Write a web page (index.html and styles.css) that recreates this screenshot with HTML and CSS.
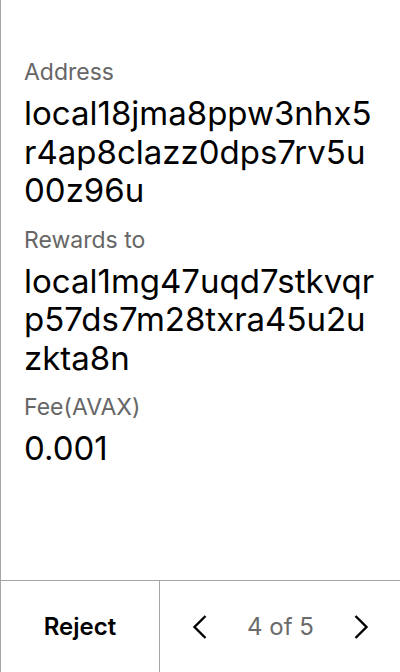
FILE: index.html
```html
<!DOCTYPE html>
<html lang="en">
<head>
<meta charset="utf-8">
<title>Review</title>
<link rel="stylesheet" href="styles.css">
</head>
<body>
<div class="screen">
  <main class="content">
    <section class="field">
      <div class="label">Address</div>
      <div class="value">local18jma8ppw3nhx5r4ap8clazz0dps7rv5u00z96u</div>
    </section>
    <section class="field">
      <div class="label">Rewards to</div>
      <div class="value">local1mg47uqd7stkvqrp57ds7m28txra45u2uzkta8n</div>
    </section>
    <section class="field">
      <div class="label">Fee(AVAX)</div>
      <div class="value">0.001</div>
    </section>
  </main>
  <footer class="actions">
    <button class="reject">Reject</button>
    <div class="pager">
      <button class="nav" aria-label="Previous">
        <svg width="16" height="26" viewBox="0 0 16 26"><polyline points="13.5,2 2.5,13 13.5,24" fill="none" stroke="#000" stroke-width="2.4"/></svg>
      </button>
      <span class="count">4 of 5</span>
      <button class="nav" aria-label="Next">
        <svg width="16" height="26" viewBox="0 0 16 26"><polyline points="2.5,2 13.5,13 2.5,24" fill="none" stroke="#000" stroke-width="2.4"/></svg>
      </button>
    </div>
  </footer>
</div>
</body>
</html>
```

FILE: styles.css
```css
* { box-sizing: border-box; }
html, body { margin: 0; padding: 0; background: #fff; }
body { font-family: Inter, "Noto Sans", sans-serif; color: #000; }

.screen {
  height: 672px;
  width: 400px;
  display: flex;
  flex-direction: column;
  border-left: 1px solid #a6a6a6;
}

.content {
  flex: 1;
  padding: 58px 24px 0 23px;
}

.field { margin-bottom: 16px; }

.label {
  font-size: 23px;
  line-height: 28px;
  color: #666;
  margin-bottom: 8px;
}

.value {
  font-size: 33px;
  line-height: 38.5px;
  color: #000;
  word-break: break-all;
}

.actions {
  height: 92px;
  display: flex;
  border-top: 1px solid #a6a6a6;
}

.reject {
  width: 159px;
  border: 0;
  border-right: 1px solid #a6a6a6;
  background: none;
  font-family: inherit;
  font-size: 24px;
  font-weight: 600;
  color: #000;
  padding: 0;
}

.pager {
  flex: 1;
  display: flex;
  align-items: center;
  justify-content: space-between;
  padding: 0 31px 0 32px;
}

.nav {
  border: 0;
  background: none;
  padding: 0;
  display: flex;
}

.count {
  font-size: 24px;
  color: #6b6b6b;
}
```
